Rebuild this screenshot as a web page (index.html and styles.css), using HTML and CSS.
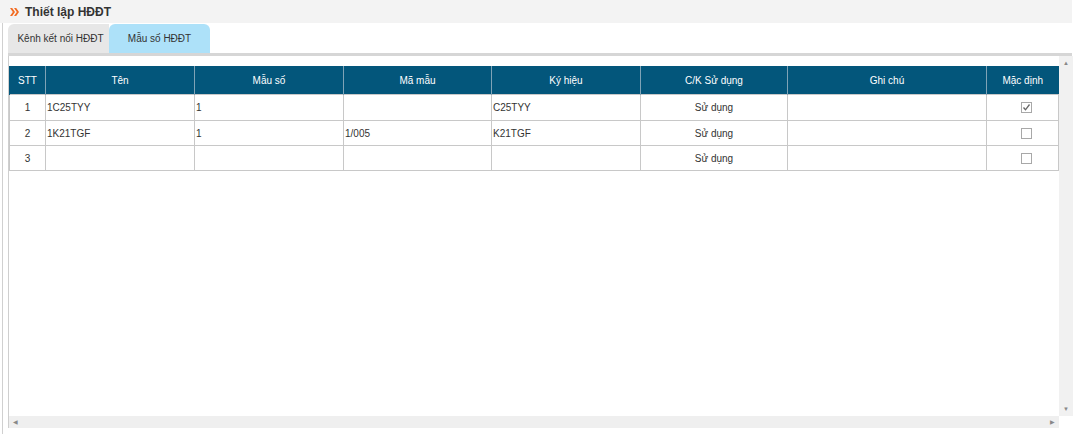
FILE: index.html
```html
<!DOCTYPE html>
<html lang="vi">
<head>
<meta charset="utf-8">
<title>Thiết lập HĐĐT</title>
<link rel="stylesheet" href="styles.css">
</head>
<body>
<div class="header">
  <svg class="chev" width="9" height="10" viewBox="0 0 9 10"><path d="M0 1 L2.2 1 L5 5 L2.2 9 L0 9 L2.8 5 Z M4 1 L6.2 1 L9 5 L6.2 9 L4 9 L6.8 5 Z" fill="#f26b21"/></svg>
  <span class="title">Thiết lập HĐĐT</span>
</div>
<div class="main">
  <div class="tabs">
    <div class="tab tab-off">Kênh kết nối HĐĐT</div>
    <div class="tab tab-on">Mẫu số HĐĐT</div>
  </div>
  <div class="panel">
    <div class="content">
      <table class="grid">
        <colgroup>
          <col class="c1"><col class="c2"><col class="c3"><col class="c4"><col class="c5"><col class="c6"><col class="c7"><col class="c8">
        </colgroup>
        <thead>
          <tr><th>STT</th><th>Tên</th><th>Mẫu số</th><th>Mã mẫu</th><th>Ký hiệu</th><th>C/K Sử dụng</th><th>Ghi chú</th><th>Mặc định</th></tr>
        </thead>
        <tbody>
          <tr class="first"><td class="ctr">1</td><td>1C25TYY</td><td>1</td><td></td><td>C25TYY</td><td class="ctr">Sử dụng</td><td></td><td class="chk"><span class="cb"><svg width="9" height="9" viewBox="0 0 9 9"><path d="M1.5 4.5 L3.5 6.8 L7.5 1.5" fill="none" stroke="#666" stroke-width="1.3"/></svg></span></td></tr>
          <tr><td class="ctr">2</td><td>1K21TGF</td><td>1</td><td>1/005</td><td>K21TGF</td><td class="ctr">Sử dụng</td><td></td><td class="chk"><span class="cb"></span></td></tr>
          <tr><td class="ctr">3</td><td></td><td></td><td></td><td></td><td class="ctr">Sử dụng</td><td></td><td class="chk"><span class="cb"></span></td></tr>
        </tbody>
      </table>
    </div>
    <div class="vscroll">
      <span class="arr">&#9650;</span>
      <span class="arr">&#9660;</span>
    </div>
    <div class="hscroll">
      <span class="arr">&#9664;</span>
      <span class="arr">&#9654;</span>
    </div>
    <div class="corner"></div>
  </div>
</div>
</body>
</html>
```
FILE: styles.css
```css
html, body {
  margin: 0;
  padding: 0;
  background: #fff;
}
body {
  font-family: "Liberation Sans", Arial, sans-serif;
  font-size: 10px;
  color: #333;
  width: 1075px;
  height: 434px;
  overflow: hidden;
}
.header {
  width: 1072px;
  height: 23px;
  background: #f3f3f3;
  display: flex;
  align-items: center;
  gap: 6px;
  padding-left: 10px;
  box-sizing: border-box;
}
.chev {
  display: block;
}
.title {
  font-size: 12px;
  font-weight: bold;
  color: #333;
}
.main {
  margin-left: 2px;
  border-left: 1px solid #d0d0d0;
  padding-left: 5px;
  padding-top: 1px;
  height: 411px;
  width: 1064px;
}
.tabs {
  display: flex;
  height: 29px;
  border-bottom: 3px solid #d6d6d6;
}
.tab {
  width: 101px;
  display: flex;
  align-items: center;
  justify-content: center;
  color: #333;
  font-size: 10px;
}
.tab-off {
  background: #e7e7e7;
  border-radius: 6px 0 0 0;
  padding-left: 4px;
  box-sizing: border-box;
}
.tab-on {
  background: #ade1f9;
  border-radius: 6px 6px 0 0;
}
.panel {
  display: grid;
  grid-template-columns: 1050px 14px;
  grid-template-rows: 360px 12px;
  height: 372px;
  border-left: 1px solid #cfcfcf;
  box-sizing: border-box;
}
.content {
  padding-top: 10px;
}
.grid {
  border-collapse: collapse;
  table-layout: fixed;
  width: 1049px;
}
.c1 { width: 36px; }
.c2 { width: 149px; }
.c3 { width: 149px; }
.c4 { width: 148px; }
.c5 { width: 149px; }
.c6 { width: 147px; }
.c7 { width: 199px; }
.c8 { width: 72px; }
.grid th {
  background: #03567b;
  color: #fff;
  font-weight: normal;
  height: 28px;
  padding: 0;
  border-left: 1px solid #7fa3b6;
  text-align: center;
  font-size: 10px;
}
.grid th:first-child {
  border-left: 1px solid #03567b;
}
.grid td {
  height: 24px;
  padding: 0 1px;
  border: 1px solid #c8c8c8;
  font-size: 10px;
  color: #333;
  white-space: nowrap;
}
.grid tr.first td {
  height: 25px;
}
.grid td.ctr {
  text-align: center;
}
.grid td.chk {
  text-align: center;
  padding-left: 8px;
}
.cb {
  display: inline-block;
  width: 9px;
  height: 9px;
  border: 1px solid #a8a8a8;
  background: #fff;
  vertical-align: middle;
}
.cb svg {
  display: block;
}
.vscroll {
  background: #f1f1f1;
  display: flex;
  flex-direction: column;
  justify-content: space-between;
  align-items: center;
  padding: 4px 0;
  box-sizing: border-box;
}
.hscroll {
  background: #efefef;
  display: flex;
  justify-content: space-between;
  align-items: center;
  padding: 0 4px;
}
.arr {
  font-size: 6px;
  color: #888;
  line-height: 6px;
}
.corner {
  background: #fff;
}
```
